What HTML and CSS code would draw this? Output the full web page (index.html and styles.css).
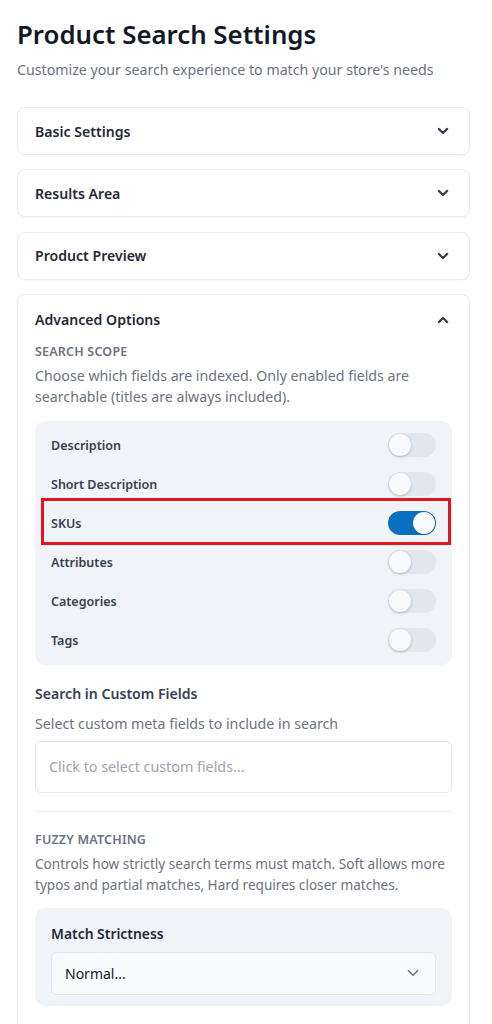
FILE: index.html
```html
<!DOCTYPE html>
<html lang="en">
<head>
<meta charset="utf-8">
<title>Product Search Settings</title>
<link rel="stylesheet" href="styles.css">
</head>
<body>
<main class="page">
  <header class="page-head">
    <h1 class="page-title">Product Search Settings</h1>
    <p class="page-sub">Customize your search experience to match your store's needs</p>
  </header>

  <section class="card">
    <div class="card-head">
      <span class="card-title">Basic Settings</span>
      <svg class="chev" viewBox="0 0 12 8" width="12" height="8"><path d="M1.8 1.9 6 6l4.2-4.1" fill="none" stroke="#374151" stroke-width="2.2" stroke-linecap="round" stroke-linejoin="round"/></svg>
    </div>
  </section>

  <section class="card">
    <div class="card-head">
      <span class="card-title">Results Area</span>
      <svg class="chev" viewBox="0 0 12 8" width="12" height="8"><path d="M1.8 1.9 6 6l4.2-4.1" fill="none" stroke="#374151" stroke-width="2.2" stroke-linecap="round" stroke-linejoin="round"/></svg>
    </div>
  </section>

  <section class="card">
    <div class="card-head">
      <span class="card-title">Product Preview</span>
      <svg class="chev" viewBox="0 0 12 8" width="12" height="8"><path d="M1.8 1.9 6 6l4.2-4.1" fill="none" stroke="#374151" stroke-width="2.2" stroke-linecap="round" stroke-linejoin="round"/></svg>
    </div>
  </section>

  <section class="card card-open">
    <div class="card-head">
      <span class="card-title">Advanced Options</span>
      <svg class="chev" viewBox="0 0 12 8" width="12" height="8"><path d="M1.8 6.1 6 2l4.2 4.1" fill="none" stroke="#374151" stroke-width="2.2" stroke-linecap="round" stroke-linejoin="round"/></svg>
    </div>
    <div class="card-body">
      <h3 class="section-label">Search Scope</h3>
      <p class="section-desc">Choose which fields are indexed. Only enabled fields are searchable (titles are always included).</p>

      <div class="panel toggles">
        <div class="toggle-row"><span class="toggle-label">Description</span><span class="switch"></span></div>
        <div class="toggle-row"><span class="toggle-label">Short Description</span><span class="switch"></span></div>
        <div class="toggle-row highlighted"><span class="toggle-label">SKUs</span><span class="switch on"></span><span class="highlight-box"></span></div>
        <div class="toggle-row"><span class="toggle-label">Attributes</span><span class="switch"></span></div>
        <div class="toggle-row"><span class="toggle-label">Categories</span><span class="switch"></span></div>
        <div class="toggle-row"><span class="toggle-label">Tags</span><span class="switch"></span></div>
      </div>

      <h4 class="field-title">Search in Custom Fields</h4>
      <p class="field-desc">Select custom meta fields to include in search</p>
      <div class="picker">Click to select custom fields...</div>

      <hr class="divider">

      <h3 class="section-label">Fuzzy Matching</h3>
      <p class="section-desc fuzzy-desc">Controls how strictly search terms must match. Soft allows more typos and partial matches, Hard requires closer matches.</p>

      <div class="panel strict">
        <div class="strict-title">Match Strictness</div>
        <div class="select">
          <span>Normal...</span>
          <svg viewBox="0 0 12 8" width="12" height="8"><path d="M1.5 1.8 6 6.2l4.5-4.4" fill="none" stroke="#6b7280" stroke-width="1.6" stroke-linecap="round" stroke-linejoin="round"/></svg>
        </div>
      </div>
    </div>
  </section>
</main>
</body>
</html>
```

FILE: styles.css
```css
* { box-sizing: border-box; }
html, body { margin: 0; padding: 0; background: #ffffff; }
body {
  font-family: "Noto Sans", "Open Sans", "Liberation Sans", sans-serif;
  color: #111827;
}
.page {
  width: 453px;
  margin-left: 17px;
  padding-top: 16px;
  display: flex;
  flex-direction: column;
  gap: 14.2px;
}
.page-head { margin-bottom: 13px; }
.page-title {
  margin: 0;
  font-size: 25.8px;
  line-height: 36px;
  font-weight: 600;
  color: #111827;
}
.page-sub {
  margin: 8px 0 0;
  font-size: 14.2px;
  line-height: 20px;
  color: #6b7280;
}
.card {
  border: 1px solid #e9ebef;
  border-radius: 8px;
  background: #fff;
  box-shadow: 0 1px 2px rgba(16, 24, 40, 0.03);
}
.card-head {
  height: 46px;
  padding: 0 20px 0 17px;
  display: flex;
  align-items: center;
  justify-content: space-between;
}
.card-open .card-head { height: 48px; padding-top: 2px; }
.card-title {
  font-size: 14.1px;
  font-weight: 600;
  color: #1f2937;
}
.chev { display: block; }
.card-body { padding: 0 17px 40px; }
.section-label {
  margin: 0;
  font-size: 12.5px;
  line-height: 18px;
  font-weight: 600;
  color: #6b7280;
  text-transform: uppercase;
  letter-spacing: 0.2px;
}
.section-desc {
  margin: 4px 0 0;
  font-size: 14.2px;
  line-height: 21.5px;
  color: #6b7280;
}
.fuzzy-desc { font-size: 13.6px; }
.panel {
  background: #f0f3f7;
  border-radius: 10px;
}
.toggles {
  margin-top: 13px;
  padding: 5px 16px;
}
.toggle-row {
  position: relative;
  height: 39px;
  display: flex;
  align-items: center;
  justify-content: space-between;
}
.toggle-label {
  font-size: 12.5px;
  font-weight: 600;
  color: #374151;
}
.switch {
  position: relative;
  width: 48px;
  height: 24px;
  border-radius: 12px;
  background: #e2e7ee;
}
.switch::after {
  content: "";
  position: absolute;
  top: 1px;
  left: 1px;
  width: 22px;
  height: 22px;
  border-radius: 50%;
  background: #f9fafc;
  box-shadow: 0 1px 3px rgba(15, 23, 42, 0.25);
}
.switch.on { background: #0a6fbe; }
.switch.on::after { left: 25px; box-shadow: 0 1px 2px rgba(15, 23, 42, 0.2); }
.highlight-box {
  position: absolute;
  top: -6px;
  bottom: -2px;
  left: -10px;
  right: -15px;
  border: 3px solid #e3161f;
  pointer-events: none;
}
.field-title {
  margin: 18px 0 0;
  font-size: 14.1px;
  line-height: 22px;
  font-weight: 600;
  color: #374151;
}
.field-desc {
  margin: 9px 0 0;
  font-size: 14.2px;
  line-height: 20px;
  color: #6b7280;
}
.picker {
  margin-top: 7px;
  height: 52px;
  border: 1px solid #e5e7eb;
  border-radius: 6px;
  padding: 0 13px;
  display: flex;
  align-items: center;
  font-size: 14.3px;
  color: #9ca3af;
}
.divider {
  margin: 18px 0 0;
  border: 0;
  border-top: 1px solid #eef0f3;
}
.divider + .section-label { margin-top: 19px; }
.strict {
  margin-top: 12px;
  padding: 15px 16px 11px;
}
.strict-title {
  font-size: 13.9px;
  line-height: 22px;
  font-weight: 600;
  color: #1f2937;
}
.select {
  margin-top: 7px;
  height: 43px;
  border: 1px solid #e3e6ea;
  border-radius: 6px;
  background: #f9fafb;
  padding: 0 16px 0 13px;
  display: flex;
  align-items: center;
  justify-content: space-between;
  font-size: 14px;
  color: #111827;
}
.select svg { display: block; }
```
